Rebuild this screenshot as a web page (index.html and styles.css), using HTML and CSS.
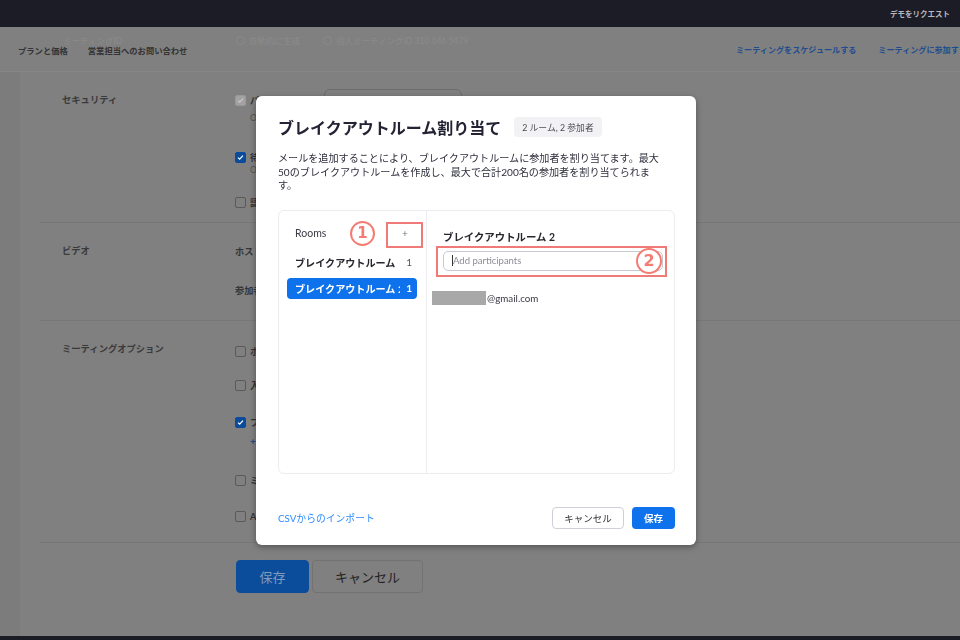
FILE: index.html
```html
<!DOCTYPE html>
<html lang="ja">
<head>
<meta charset="utf-8">
<title>ブレイクアウトルーム割り当て</title>
<link rel="stylesheet" href="styles.css">
</head>
<body>
<div class="topbar"><span class="demo">デモをリクエスト</span></div>
<header class="nav">
  <div class="ghost">
    <span class="ghost-label">ミーティングID</span>
    <span class="ghost-radio g1"><i></i>自動的に生成</span>
    <span class="ghost-radio g2"><i></i>個人ミーティングID 310 646 5479</span>
  </div>
  <nav class="nav-left"><a>プランと価格</a><a>営業担当へのお問い合わせ</a></nav>
  <nav class="nav-right"><a>ミーティングをスケジュールする</a><a>ミーティングに参加す</a></nav>
</header>
<div class="page">
  <aside class="side"></aside>
  <main class="content">
    <section class="sec sec1">
      <div class="sec-label">セキュリティ</div>
      <div class="sec-body">
        <div class="row row-a"><span class="cb cb-dis"><svg viewBox="0 0 11 11"><path d="M2.5 5.6l2 2 4-4.4"/></svg></span><span class="pw-label">パスコード</span><span class="pw-btn"></span></div>
        <div class="sub">OK</div>
        <div class="row row-b"><span class="cb cb-on"><svg viewBox="0 0 11 11"><path d="M2.5 5.6l2 2 4-4.4"/></svg></span><span>待機室</span></div>
        <div class="sub sub-b">OK</div>
        <div class="row row-c"><span class="cb"></span><span>認証されているユーザーしか参加できません</span></div>
      </div>
    </section>
    <section class="sec sec2">
      <div class="sec-label">ビデオ</div>
      <div class="sec-body">
        <div class="row">ホスト</div>
        <div class="row row-gap25">参加者</div>
      </div>
    </section>
    <section class="sec sec3">
      <div class="sec-label">ミーティングオプション</div>
      <div class="sec-body">
        <div class="row"><span class="cb"></span><span>ホストより前の参加を有効にする</span></div>
        <div class="row m20"><span class="cb"></span><span>入室時に参加者をミュートする</span></div>
        <div class="row m23"><span class="cb cb-on"><svg viewBox="0 0 11 11"><path d="M2.5 5.6l2 2 4-4.4"/></svg></span><span>ブレイクアウトルーム事前割り当て</span></div>
        <div class="row m4 add">+ 作成</div>
        <div class="row m26"><span class="cb"></span><span>ミーティングを自動的にレコーディング</span></div>
        <div class="row m22"><span class="cb"></span><span>Allow</span></div>
      </div>
    </section>
    <div class="actions">
      <button class="btn-save">保存</button>
      <button class="btn-cancel">キャンセル</button>
    </div>
  </main>
</div>
<div class="bottombar"></div>

<div class="modal">
  <div class="modal-head">
    <h1 class="modal-title">ブレイクアウトルーム割り当て</h1>
    <span class="badge">2 ルーム, 2 参加者</span>
  </div>
  <p class="desc">メールを追加することにより、ブレイクアウトルームに参加者を割り当てます。最大<br>50のブレイクアウトルームを作成し、最大で合計200名の参加者を割り当てられま<br>す。</p>
  <div class="panel">
    <div class="rooms">
      <div class="rooms-head"><span>Rooms</span><span class="add-room">+</span></div>
      <div class="room"><span class="room-name">ブレイクアウトルーム</span><span class="room-count">1</span></div>
      <div class="room room-active"><span class="room-name">ブレイクアウトルーム 2</span><span class="room-count">1</span></div>
    </div>
    <div class="detail">
      <div class="detail-title">ブレイクアウトルーム 2</div>
      <div class="input"><span class="caret"></span><span class="ph">Add participants</span></div>
      <div class="email"><span class="redact"></span><span>@gmail.com</span></div>
    </div>
    <span class="mark mark-plus"></span>
    <span class="mark mark-input"></span>
    <span class="num num1">1</span>
    <span class="num num2">2</span>
  </div>
  <div class="modal-foot">
    <a class="csv">CSVからのインポート</a>
    <button class="m-cancel">キャンセル</button>
    <button class="m-save">保存</button>
  </div>
</div>
</body>
</html>
```
FILE: styles.css
```css
* { box-sizing: border-box; }
html, body { margin: 0; padding: 0; }
body {
  width: 960px;
  height: 640px;
  overflow: hidden;
  background: #808080;
  font-family: Lato, "Noto Sans CJK JP", sans-serif;
  color: #333;
  display: flex;
  flex-direction: column;
}
button { font-family: inherit; cursor: pointer; }

.topbar {
  height: 27px;
  flex: none;
  background: #1c1c27;
  display: flex;
  align-items: center;
  justify-content: flex-end;
  padding-right: 10px;
}
.demo { font-size: 7.5px; color: #b9b9be; font-weight: 700; }

.nav {
  height: 45px;
  flex: none;
  position: relative;
  display: flex;
  align-items: center;
  padding-left: 18px;
  padding-top: 1px;
  border-bottom: 1px solid #868686;
  white-space: nowrap;
  overflow: hidden;
}
.ghost {
  position: absolute;
  left: 0;
  top: 7px;
  height: 12px;
  width: 100%;
  font-size: 8.5px;
  color: #8b8b8b;
}
.ghost span { position: absolute; top: 0; display: flex; align-items: center; gap: 4px; }
.ghost-label { left: 63px; }
.g1 { left: 236px; }
.g2 { left: 323px; }
.ghost i { width: 9px; height: 9px; border: 1px solid #8b8b8b; border-radius: 50%; display: inline-block; }
.nav-left { width: 718px; flex: none; display: flex; gap: 20px; }
.nav-left a { font-size: 8.3px; font-weight: 700; color: #333; }
.nav-right { flex: none; display: flex; gap: 22px; }
.nav-right a { font-size: 8.1px; font-weight: 700; color: #1d4d8e; }

.page { flex: 1; display: flex; }
.side { width: 20px; flex: none; background: #7c7c7c; }
.content { flex: 1; margin-left: 20px; }

.sec {
  display: grid;
  grid-template-columns: 195px 1fr;
  border-bottom: 1px solid #777;
}
.sec1 { height: 151px; }
.sec2 { height: 98px; }
.sec3 { height: 222px; }
.sec-label {
  padding: 21px 0 0 22px;
  font-size: 9.3px;
  line-height: 14px;
  font-weight: 700;
  color: #3a3a3a;
}
.sec-body { font-size: 9.2px; color: #333; white-space: nowrap; overflow: hidden; }
.sec1 .sec-body { padding-top: 17px; }
.sec2 .sec-body { padding-top: 21px; }
.sec3 .sec-body { padding-top: 23px; }

.row { height: 14px; display: flex; align-items: center; font-weight: 700; color: #353535; }
.row-a { height: 22px; }
.row-b { margin-top: 25px; }
.row-c { margin-top: 19px; }
.row-gap25 { margin-top: 25px; }
.m20 { margin-top: 20px; }
.m23 { margin-top: 23px; }
.m4 { margin-top: 4px; }
.m26 { margin-top: 26px; }
.m22 { margin-top: 22px; }
.add { color: #1d4d8e; padding-left: 15px; font-size: 10px; }
.sub { height: 14px; display: flex; align-items: center; padding-left: 15px; font-size: 8.5px; color: #555; }
.sub-b { height: 12px; }

.cb {
  width: 11px; height: 11px; flex: none;
  border: 1px solid #5a5a5a; border-radius: 2px;
  margin-right: 4px;
  display: flex; align-items: center; justify-content: center;
}
.cb svg { width: 11px; height: 11px; }
.cb path { fill: none; stroke: #fff; stroke-width: 1.5; }
.cb-on { background: #0b4b9b; border-color: #0b4b9b; }
.cb-dis { background: #a2a2a2; border-color: #999; }
.cb-dis path { stroke: #c9c9c9; }
.pw-label { width: 74px; }
.pw-btn {
  width: 138px; height: 22px;
  border: 1px solid #6c6c6c; border-radius: 6px;
}

.actions { display: flex; gap: 3px; padding-left: 196px; margin-top: 17px; }
.btn-save {
  width: 73px; height: 33px;
  background: #0b4c9b; border: 1px solid #0b4c9b; border-radius: 4px;
  color: #8199bb; font-size: 13px;
}
.btn-cancel {
  width: 111px; height: 33px;
  background: transparent; border: 1px solid #727272; border-radius: 4px;
  color: #232323; font-size: 13px;
}
.bottombar { height: 4px; flex: none; background: #1c1c27; }

/* modal */
.modal {
  position: fixed;
  left: 256px; top: 96px;
  width: 440px; height: 449px;
  background: #fff;
  border-radius: 6px;
  box-shadow: 0 2px 6px rgba(0,0,0,.35);
  padding: 16px 21px 16px 22px;
  display: flex;
  flex-direction: column;
}
.modal-head { height: 30px; display: flex; align-items: center; }
.modal-title { margin: 0; font-size: 16px; font-weight: 700; color: #232333; letter-spacing: 0; }
.badge {
  margin-left: 13px;
  height: 20px;
  padding: 0 8px;
  background: #f2f2f5;
  border-radius: 4px;
  font-size: 8.8px;
  color: #4a4a52;
  display: flex; align-items: center;
}
.desc {
  margin: 10px 0 0;
  font-size: 10.1px;
  line-height: 13.5px;
  color: #2f2f3d;
  white-space: nowrap;
}
.panel {
  position: relative;
  margin-top: 17px;
  height: 264px;
  border: 1px solid #ececf0;
  border-radius: 6px;
  display: flex;
}
.rooms {
  width: 148px;
  border-right: 1px solid #ececf0;
  padding: 12px 9px 0 8px;
}
.rooms-head {
  height: 20px;
  display: flex; align-items: center; justify-content: space-between;
  padding-left: 8px;
  font-size: 10.5px;
  color: #3a3a44;
}
.add-room { width: 20px; text-align: center; margin-right: 2px; font-size: 10px; color: #777; }
.room {
  height: 21px;
  margin-top: 9px;
  display: flex; align-items: center;
  padding: 0 5px 0 8px;
  font-size: 10.1px;
  font-weight: 700;
  color: #26262e;
  border-radius: 4px;
}
.room + .room { margin-top: 5px; }
.room-name { flex: 1; min-width: 0; overflow: hidden; white-space: nowrap; }
.room-count { margin-left: 6px; font-weight: 400; color: #555; }
.room-active { background: #0e72ed; color: #fff; }
.room-active .room-count { color: #fff; font-weight: 700; }

.detail { flex: 1; padding: 18px 0 0 16px; }
.detail-title { height: 16px; line-height: 16px; font-size: 10.4px; font-weight: 700; color: #26262e; }
.input {
  margin-top: 6px;
  width: 220px; height: 20px;
  border: 1px solid #c9c9d3; border-radius: 5px;
  display: flex; align-items: center;
  padding-left: 8px;
  font-size: 9.5px;
}
.caret { width: 1px; height: 11px; background: #333; }
.ph { color: #8c8c96; }
.email {
  margin: 20px 0 0 -11px;
  height: 14px;
  display: flex; align-items: center;
  font-size: 9.8px; color: #3a3a44;
}
.redact { width: 54px; height: 14px; background: #a8a8a8; margin-right: 1px; }

.mark { position: absolute; border: 2px solid #f07a78; }
.mark-plus { left: 107px; top: 11px; width: 37px; height: 26px; }
.mark-input { left: 157px; top: 35px; width: 231px; height: 31px; }
.num {
  position: absolute;
  border: 2.5px solid #f47c73;
  border-radius: 50%;
  color: #f47c73;
  font-weight: 900;
  display: flex; align-items: center; justify-content: center;
  background: #fff;
  font-family: "DejaVu Sans", sans-serif;
}
.num1 { left: 71px; top: 10px; width: 25px; height: 25px; font-size: 15px; }
.num2 { left: 357px; top: 37px; width: 26px; height: 26px; font-size: 16px; }

.modal-foot { margin-top: auto; height: 22px; display: flex; align-items: center; }
.csv { font-size: 9.8px; color: #2d8cff; margin-right: auto; }
.m-cancel {
  width: 72px; height: 22px;
  background: #fff; border: 1px solid #cfcfd7; border-radius: 4px;
  font-size: 9.5px; color: #333;
}
.m-save {
  margin-left: 8px;
  width: 43px; height: 22px;
  background: #0e72ed; border: none; border-radius: 4px;
  font-size: 9.5px; font-weight: 700; color: #fff;
}
```
